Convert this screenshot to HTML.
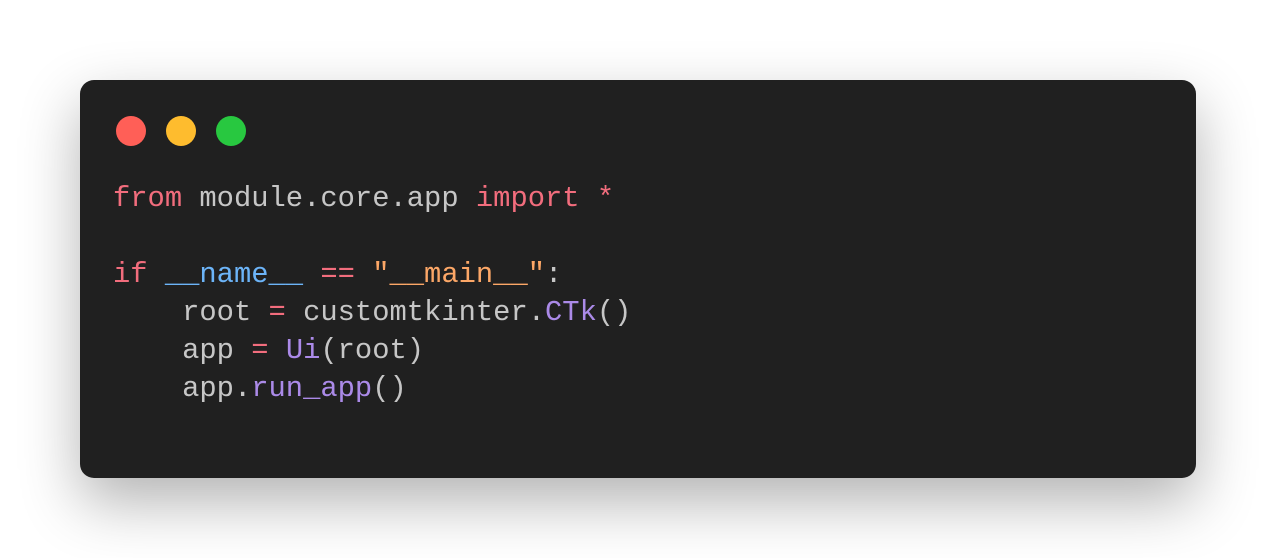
<!DOCTYPE html>
<html><head><style>
html,body{margin:0;padding:0;background:#fff;width:1276px;height:558px;overflow:hidden}
.card{position:absolute;left:80px;top:80px;width:1116px;height:398px;background:#202020;border-radius:14px;box-shadow:0 24px 60px rgba(0,0,0,0.3)}
.dot{position:absolute;top:36px;width:30px;height:30px;border-radius:50%}
pre{position:absolute;left:33px;top:100px;margin:0;font-family:"Liberation Mono",monospace;font-size:28.8px;line-height:38px;color:#c6c6c6}
.k{color:#f26d7d}.n{color:#6cb4f8}.s{color:#fca767}.f{color:#ab8ae8}
</style></head><body>
<div class="card">
<div class="dot" style="left:36px;background:#ff5f57"></div>
<div class="dot" style="left:86px;background:#febc2e"></div>
<div class="dot" style="left:136px;background:#28c840"></div>
<pre><span class="k">from</span> module.core.app <span class="k">import</span> <span class="k">*</span>

<span class="k">if</span> <span class="n">__name__</span> <span class="k">==</span> <span class="s">"__main__"</span>:
    root <span class="k">=</span> customtkinter.<span class="f">CTk</span>()
    app <span class="k">=</span> <span class="f">Ui</span>(root)
    app.<span class="f">run_app</span>()</pre>
</div>
</body></html>
